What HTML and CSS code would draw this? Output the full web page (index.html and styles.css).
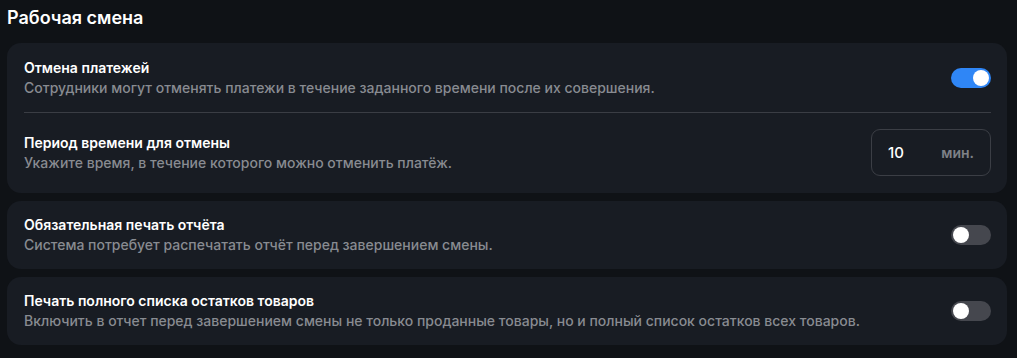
FILE: index.html
```html
<!DOCTYPE html>
<html lang="ru">
<head>
<meta charset="utf-8">
<title>Рабочая смена</title>
<link rel="stylesheet" href="styles.css">
</head>
<body>
<main class="section">
  <h2 class="section-title">Рабочая смена</h2>
  <div class="card">
    <div class="row row-first">
      <div class="text">
        <div class="row-title">Отмена платежей</div>
        <div class="row-desc">Сотрудники могут отменять платежи в течение заданного времени после их совершения.</div>
      </div>
      <span class="toggle on"><span class="knob"></span></span>
    </div>
    <div class="divider"></div>
    <div class="row row-input">
      <div class="text">
        <div class="row-title">Период времени для отмены</div>
        <div class="row-desc">Укажите время, в течение которого можно отменить платёж.</div>
      </div>
      <div class="field">
        <span class="field-value">10</span>
        <span class="field-unit">мин.</span>
      </div>
    </div>
  </div>
  <div class="card">
    <div class="row">
      <div class="text">
        <div class="row-title">Обязательная печать отчёта</div>
        <div class="row-desc">Система потребует распечатать отчёт перед завершением смены.</div>
      </div>
      <span class="toggle"><span class="knob"></span></span>
    </div>
  </div>
  <div class="card">
    <div class="row">
      <div class="text">
        <div class="row-title">Печать полного списка остатков товаров</div>
        <div class="row-desc">Включить в отчет перед завершением смены не только проданные товары, но и полный список остатков всех товаров.</div>
      </div>
      <span class="toggle"><span class="knob"></span></span>
    </div>
  </div>
</main>
</body>
</html>
```
FILE: styles.css
```css
* { box-sizing: border-box; }
html, body { margin: 0; padding: 0; }
body {
  background: #0f1216;
  color: #ffffff;
  font-family: Inter, "Noto Sans", sans-serif;
  -webkit-font-smoothing: antialiased;
}
.section {
  padding: 6px 10px 0 7px;
  display: flex;
  flex-direction: column;
  gap: 8px;
}
.section-title {
  margin: 0 0 5px 0;
  font-size: 18px;
  line-height: 24px;
  font-weight: 600;
  color: #ffffff;
}
.card {
  background: #181c23;
  border-radius: 14px;
  padding: 0 16px 0 17px;
}
.row {
  display: flex;
  align-items: center;
  justify-content: space-between;
  gap: 24px;
  padding: 14px 0;
}
.row-first { padding: 15px 0 14px; }
.row-input { padding: 16px 0 17px; }
.text { display: flex; flex-direction: column; }
.row-title {
  font-size: 14px;
  line-height: 20px;
  font-weight: 600;
  color: #ffffff;
}
.row-desc {
  font-size: 14px;
  line-height: 20px;
  font-weight: 500;
  color: #888b91;
}
.divider {
  height: 1px;
  background: #3a3d44;
}
.toggle {
  flex: none;
  width: 40px;
  height: 20px;
  border-radius: 10px;
  background: #45474e;
  display: flex;
  align-items: center;
  padding: 0 2px;
}
.toggle.on {
  background: #2f86f6;
  justify-content: flex-end;
}
.knob {
  width: 16px;
  height: 16px;
  border-radius: 50%;
  background: #ffffff;
}
.field {
  flex: none;
  width: 120px;
  height: 47px;
  border: 1px solid #3b3e45;
  border-radius: 9px;
  display: flex;
  align-items: center;
  justify-content: space-between;
  padding: 0 16px 0 16px;
}
.field-value {
  font-size: 15px;
  font-weight: 500;
  color: #ffffff;
}
.field-unit {
  font-size: 14px;
  font-weight: 600;
  color: #7e8187;
}
```
